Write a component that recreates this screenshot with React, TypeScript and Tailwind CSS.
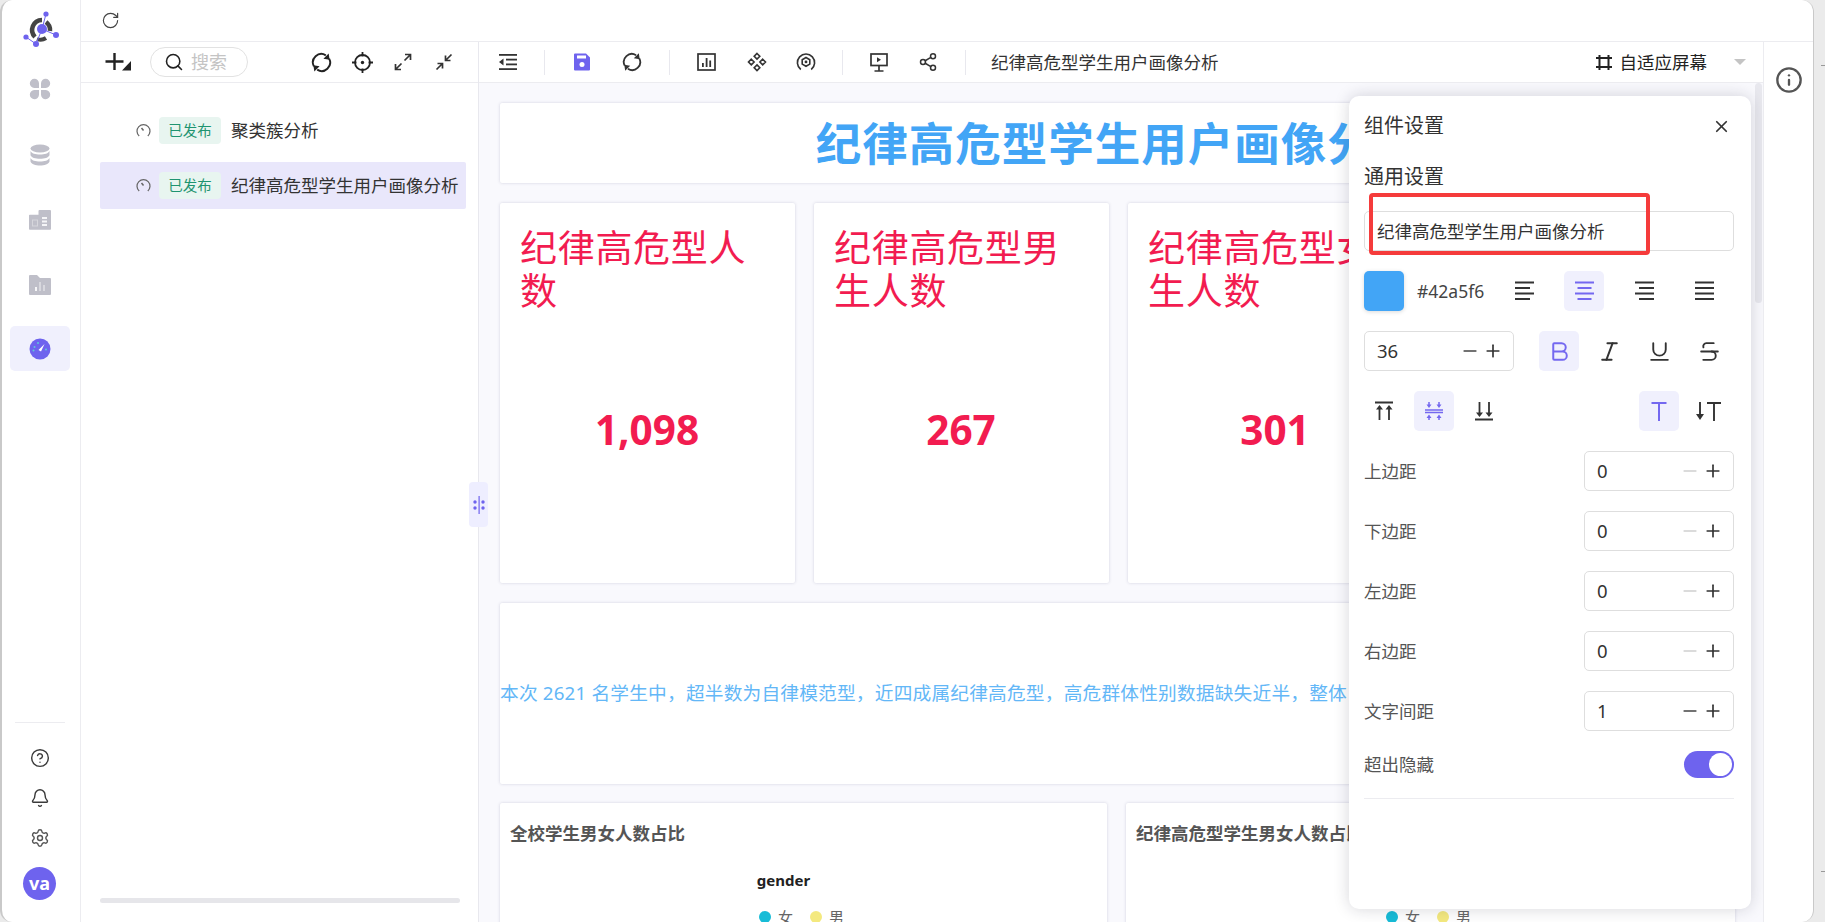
import React from "react";
import {
  RotateCw, Search, CircleHelp, Bell, Settings, Info, X, Minus, Plus,
  Bold, Italic, Underline, Strikethrough, Share2,
} from "lucide-react";

const TITLE = "纪律高危型学生用户画像分析";

const Logo = () => (
  <svg width="40" height="40" viewBox="0 0 40 40">
    <path d="M14 27a10 10 0 0 1 7-17" fill="none" stroke="#444" strokeWidth="4.5" />
    <path d="M25 12a10 10 0 0 1 4 9" fill="none" stroke="#444" strokeWidth="4.5" />
    <path d="M16 29a10 10 0 0 0 9-1" fill="none" stroke="#444" strokeWidth="4" />
    <g stroke="#6e63ee" strokeWidth="1">
      <line x1="21" y1="19" x2="25" y2="4" />
      <line x1="21" y1="19" x2="35" y2="25" />
      <line x1="21" y1="19" x2="15" y2="34" />
      <line x1="5" y1="27" x2="15" y2="34" />
    </g>
    <circle cx="21" cy="19" r="5" fill="#6e63ee" />
    <circle cx="25" cy="4" r="2.6" fill="#6e63ee" />
    <circle cx="35" cy="25" r="3" fill="#6e63ee" />
    <circle cx="15" cy="34" r="3" fill="#6e63ee" />
    <circle cx="5" cy="27" r="2.6" fill="#6e63ee" />
  </svg>
);

const Clover = () => (
  <svg width="22" height="22" viewBox="0 0 22 22" fill="#bfbfc9">
    <path d="M10 10H5.2a4.6 4.6 0 1 1 4.8-4.8z" />
    <path d="M12 10h4.8A4.6 4.6 0 1 0 12 5.2z" />
    <path d="M10 12H5.2a4.6 4.6 0 1 0 4.8 4.8z" />
    <path d="M12 12h4.8A4.6 4.6 0 1 1 12 16.800z" />
  </svg>
);

const Db = () => (
  <svg width="22" height="22" viewBox="0 0 22 22" fill="#bfbfc9">
    <ellipse cx="11" cy="4.500" rx="9.500" ry="4" />
    <path d="M1.500 7c1 2.400 5 3.600 9.500 3.600S19.500 9.400 20.500 7v4.200c-1 2.400-5 3.600-9.500 3.600S2.500 13.600 1.500 11.200z" />
    <path d="M1.500 14c1 2.400 5 3.600 9.500 3.600s8.500-1.200 9.500-3.600v3.500c-1 2.600-5 4-9.500 4s-8.500-1.400-9.500-4z" />
  </svg>
);

const Report = () => (
  <svg width="22" height="20" viewBox="0 0 22 20" fill="#bfbfc9">
    <path d="M0 5.500a.8.8 0 0 1 .8-.8H9.500V1a1 1 0 0 1 1-1H21a1 1 0 0 1 1 1v18a.8.8 0 0 1-.8.8H.8A.8.8 0 0 1 0 19z" />
    <rect x="3.500" y="10" width="5" height="6" fill="none" stroke="#d6d6dc" strokeWidth="1" />
    <g fill="#f5f5f7">
      <rect x="13" y="7" width="5" height="2" />
      <rect x="13" y="10.500" width="5" height="2" />
      <rect x="13" y="14" width="5" height="2" />
    </g>
  </svg>
);

const FolderChart = () => (
  <svg width="22" height="20" viewBox="0 0 22 20" fill="#bfbfc9">
    <path d="M0 1a1 1 0 0 1 1-1h7l3 3h10a1 1 0 0 1 1 1v15a1 1 0 0 1-1 1H1a1 1 0 0 1-1-1z" />
    <rect x="6" y="12" width="2" height="4" fill="#f5f5f7" />
    <rect x="10" y="7" width="2" height="9" fill="#d8d8de" />
    <rect x="14" y="10" width="2" height="6" fill="#d8d8de" />
  </svg>
);

const GaugeFill = () => (
  <svg width="22" height="22" viewBox="0 0 22 22">
    <circle cx="11" cy="11" r="10.500" fill="#6e63ee" />
    <path d="M9.500 12 15.500 6 12 13.500z" fill="#fff" />
    <circle cx="5.500" cy="9" r="1" fill="#5ec8d8" />
    <circle cx="9" cy="5" r="1" fill="#5ec8d8" />
    <circle cx="17" cy="11.500" r="1" fill="#5ec8d8" />
    <circle cx="4.500" cy="12.500" r="1" fill="#5ec8d8" />
  </svg>
);

const PlusCaret = () => (
  <svg width="27" height="20" viewBox="0 0 27 20">
    <path d="M9.500 1v17M0.500 9.500h18" stroke="#222" strokeWidth="2.400" fill="none" />
    <path d="M26 9v9.500H17z" fill="#222" />
  </svg>
);

const Sync = ({ size, color }: { size: number; color: string }) => (
  <svg width={size} height={size} viewBox="0 0 22 22" fill="none" stroke={color} strokeWidth="2">
    <path d="M3 15A8.800 8.800 0 0 1 15.500 3.500" />
    <path d="M19 7A8.800 8.800 0 0 1 6.500 18.500" />
    <path d="M18.500 1.500 19.500 8 13 7z" fill={color} stroke="none" />
    <path d="M3.500 20.500 2.500 14 9 15z" fill={color} stroke="none" />
  </svg>
);

const Target = () => (
  <svg width="21" height="21" viewBox="0 0 21 21" fill="none" stroke="#222" strokeWidth="1.800">
    <circle cx="10.500" cy="10.500" r="7.500" />
    <path d="M10.500 0v4.500M10.500 16.500V21M0 10.500h4.500M16.500 10.500H21" />
    <circle cx="10.500" cy="10.500" r="1.700" fill="#222" stroke="none" />
  </svg>
);

const Expand = () => (
  <svg width="18" height="18" viewBox="0 0 18 18" fill="none" stroke="#333" strokeWidth="1.700">
    <path d="M10.500 7.500 16.500 1.500M11 1.500h5.500V7" />
    <path d="M7.500 10.500 1.500 16.500M1.500 11v5.500H7" />
  </svg>
);

const Collapse = () => (
  <svg width="18" height="18" viewBox="0 0 18 18" fill="none" stroke="#333" strokeWidth="1.700">
    <path d="M16.500 1.500 10.500 7.500M10.500 2.500v5h5" />
    <path d="M1.500 16.500 7.500 10.500M2.500 10.500h5v5" />
  </svg>
);

const Indent = () => (
  <svg width="18" height="16" viewBox="0 0 18 16" fill="#333">
    <rect x="0" y="0" width="18" height="1.800" />
    <rect x="7" y="4.700" width="11" height="1.800" />
    <rect x="7" y="9.500" width="11" height="1.800" />
    <rect x="0" y="14.200" width="18" height="1.800" />
    <path d="M4.500 4.500v7L0 8z" />
  </svg>
);

const SaveIcon = () => (
  <svg width="18" height="18" viewBox="0 0 18 18">
    <path d="M1 1.500A1 1 0 0 1 2 .5h11l4 4v12a1 1 0 0 1-1 1H2a1 1 0 0 1-1-1z" fill="#6e63ee" />
    <rect x="4" y="2.500" width="9" height="3" fill="#fff" />
    <circle cx="9" cy="11.500" r="2.500" fill="#fff" />
  </svg>
);

const ChartBox = () => (
  <svg width="19" height="18" viewBox="0 0 19 18" fill="none" stroke="#333">
    <rect x="1" y="1" width="17" height="16" strokeWidth="1.700" />
    <g fill="#333" stroke="none">
      <rect x="5" y="10" width="1.800" height="4" />
      <rect x="8.700" y="5" width="1.800" height="9" />
      <rect x="12.300" y="7.500" width="1.800" height="6.500" />
    </g>
  </svg>
);

const Diamonds = () => (
  <svg width="20" height="20" viewBox="0 0 20 20" fill="none" stroke="#333" strokeWidth="1.600">
    <path d="M10 1.500 12.800 4.300 10 7.100 7.200 4.300z" />
    <path d="M10 12.900 12.800 15.700 10 18.500 7.200 15.700z" />
    <path d="M4.300 7.200 7.100 10 4.300 12.800 1.500 10z" />
    <path d="M15.700 7.200 18.500 10 15.700 12.800 12.900 10z" />
  </svg>
);

const GaugeOut = () => (
  <svg width="20" height="20" viewBox="0 0 20 20" fill="none" stroke="#333" strokeWidth="1.600">
    <path d="M4.800 17.500A8.600 8.600 0 1 1 15.200 17.500" />
    <path d="M10 5.500 13.800 7.700v4.400L10 14.300 6.200 12.100V7.700z" />
    <circle cx="10" cy="9.900" r="1.400" fill="#333" stroke="none" />
  </svg>
);

const Screen = () => (
  <svg width="18" height="19" viewBox="0 0 18 19" fill="none" stroke="#333" strokeWidth="1.700">
    <rect x="1" y="1" width="16" height="11.500" />
    <path d="M9 12.500V18M4.500 18h9" />
    <path d="M7 4.300v5l4-2.500z" fill="#333" stroke="none" />
  </svg>
);

const FitFrame = () => (
  <svg width="16" height="15" viewBox="0 0 16 15" fill="none" stroke="#222" strokeWidth="2">
    <path d="M0 3h16M0 12h16M3.500 0v15M12.500 0v15" />
  </svg>
);

const ClockSmall = () => (
  <svg width="15" height="15" viewBox="0 0 15 15" fill="none" stroke="#666" strokeWidth="1.200">
    <path d="M3.200 13a6.500 6.500 0 1 1 8.600 0" />
    <path d="M5.500 5 7.500 7.500" strokeWidth="1.500" />
  </svg>
);

const Grip = () => (
  <svg width="12" height="18" viewBox="0 0 12 18" fill="#6e63ee">
    <rect x="5.500" y="0" width="1.200" height="18" />
    <circle cx="2" cy="6" r="1.700" />
    <circle cx="2" cy="12" r="1.700" />
    <circle cx="10" cy="6" r="1.700" />
    <circle cx="10" cy="12" r="1.700" />
  </svg>
);

const AlignLines = ({ kind }: { kind: "left" | "center" | "right" | "justify" }) => {
  const short = kind === "left" ? "M0 7h15M0 18h15" : kind === "center" ? "M2.500 7h14M2.500 18h14" : kind === "right" ? "M4 7h15M4 18h15" : "M0 7h19M0 18h19";
  return (
    <svg width="19" height="20" viewBox="0 0 19 20" fill="none" stroke="currentColor" strokeWidth="1.800">
      <path d="M0 1.500h19M0 12.500h19" />
      <path d={short} />
    </svg>
  );
};

const VTop = () => (
  <svg width="20" height="20" viewBox="0 0 20 20" fill="none" stroke="currentColor" strokeWidth="1.800">
    <path d="M1 1.500h18M5.500 19V6M15 19V6" />
    <path d="M5.500 4 2 8.500h7zM15 4l-3.500 4.500h7z" fill="currentColor" stroke="none" />
  </svg>
);

const VMid = () => (
  <svg width="20" height="20" viewBox="0 0 20 20" fill="currentColor" stroke="currentColor">
    <path d="M1 9h18M1 11.500h18" strokeWidth="1.500" fill="none" />
    <path d="M5 7 2.500 3.500h5zM15 7l-2.500-3.500h5zM5 13.500l-2.500 3.500h5zM15 13.500l-2.500 3.500h5z" stroke="none" />
    <path d="M5 1v3M15 1v3M5 16v3M15 16v3" strokeWidth="1.500" fill="none" />
  </svg>
);

const VBottom = () => (
  <svg width="20" height="20" viewBox="0 0 20 20" fill="none" stroke="currentColor" strokeWidth="1.800">
    <path d="M1 18.500h18M5.500 1v13M15 1v13" />
    <path d="M5.500 16 2 11.500h7zM15 16l-3.500-4.500h7z" fill="currentColor" stroke="none" />
  </svg>
);

const TextH = () => (
  <svg width="16" height="20" viewBox="0 0 16 20" fill="none" stroke="currentColor" strokeWidth="2">
    <path d="M0.500 2h15M8 2v18" />
  </svg>
);

const TextV = () => (
  <svg width="26" height="20" viewBox="0 0 26 20" fill="none" stroke="#333" strokeWidth="1.900">
    <path d="M11 2h14M18 2v18" />
    <path d="M4 1v14" />
    <path d="M4 19 0 13h8z" fill="#333" stroke="none" />
  </svg>
);

const NavItem = ({ active, children }: { active?: boolean; children: React.ReactNode }) => (
  <div className={`flex h-[45px] w-[60px] items-center justify-center rounded-[5px] ${active ? "bg-[#f0f0fd]" : ""}`}>
    {children}
  </div>
);

const Sep = () => <div className="mx-[1px] h-[25px] w-px bg-[#e8e8ee]" />;

const Stepper = ({ value, dim, width }: { value: string; dim?: boolean; width: string }) => (
  <div className={`flex h-[40px] items-center rounded-[5px] border border-[#dedede] pl-[12px] pr-[10px] text-[18.500px] text-[#333] ${width}`}>
    <span className="flex-1">{value}</span>
    <Minus size={20} strokeWidth={2} className={dim ? "text-[#cfcfcf]" : "text-[#444]"} />
    <Plus size={20} strokeWidth={2} className="ml-[3px] text-[#333]" />
  </div>
);

const Row = ({ label, value, dim }: { label: string; value: string; dim?: boolean }) => (
  <div className="mt-[20px] flex items-center justify-between">
    <span className="text-[17.500px] text-[#555]">{label}</span>
    <Stepper value={value} dim={dim} width="w-[150px]" />
  </div>
);

const ToolBtn = ({ active, className, children }: { active?: boolean; className?: string; children: React.ReactNode }) => (
  <div
    className={`flex h-[40px] w-[40px] items-center justify-center rounded-[5px] ${
      active ? "bg-[#f0f0fd] text-[#7468f0]" : "text-[#333]"
    } ${className ?? ""}`}
  >
    {children}
  </div>
);

const Kpi = ({ title, value }: { title: string; value: string }) => (
  <div className="h-[380px] w-[295px] shrink-0 rounded-[2px] bg-white pl-[20px] pr-[20px] pt-[23px] shadow-[0_0_3px_rgba(80,80,120,0.24)]">
    <div className="h-[181px] text-[37px] leading-[43px] tracking-[0.700px] text-[#f21c50]">{title}</div>
    <div className="pr-[1px] text-center text-[40.500px] font-bold leading-[46px] text-[#f21c50]">{value}</div>
  </div>
);

const ChartCard = ({
  title,
  gender,
  className,
}: {
  title: string;
  gender?: boolean;
  className: string;
}) => (
  <div className={`h-[400px] rounded-[2px] bg-white pl-[10px] pt-[20px] shadow-[0_0_3px_rgba(80,80,120,0.24)] ${className}`}>
    <div className="text-[17.500px] font-bold leading-[20px] text-[#555]">{title}</div>
    <div className="mt-[27px] flex flex-col items-center">
      <div className={`mr-[50px] text-[15px] font-bold leading-[20px] text-[#222] ${gender ? "" : "invisible"}`}>gender</div>
      <div className="mr-[14px] mt-[17px] flex items-center text-[15px] leading-[20px] text-[#666]">
        <span className="h-[12px] w-[12px] rounded-full bg-[#17bcd7]" />
        <span className="ml-[7px]">女</span>
        <span className="ml-[17px] h-[12px] w-[12px] rounded-full bg-[#f4e97f]" />
        <span className="ml-[7px]">男</span>
      </div>
    </div>
  </div>
);

export default function App() {
  return (
    <div className="relative flex h-[922px] w-[1825px] overflow-hidden bg-[#ebebeb] font-['Noto_Sans','Noto_Sans_CJK_SC',sans-serif] text-[#333]">
      <div className="flex h-full w-[1814px] overflow-hidden rounded-[12px] border-x-2 border-l-[#c9c9c9] border-r-[#c9c9c9] bg-white [border-right-width:1px]">
        {/* Sidebar */}
        <aside className="flex w-[79px] shrink-0 flex-col items-center border-r border-[#ececf0] pr-[3px]">
          <div className="ml-[2px] mt-[10px] flex h-[40px] items-center justify-center"><Logo /></div>
          <div className="mt-[16px]"><NavItem><Clover /></NavItem></div>
          <div className="mt-[21px]"><NavItem><Db /></NavItem></div>
          <div className="mt-[20px]"><NavItem><Report /></NavItem></div>
          <div className="mt-[20px]"><NavItem><FolderChart /></NavItem></div>
          <div className="mt-[19px]"><NavItem active><GaugeFill /></NavItem></div>
          <div className="mt-auto h-px w-[50px] bg-[#ececf0]" />
          <div className="mt-[25px] flex flex-col items-center gap-[20px] text-[#3a3a3a]">
            <CircleHelp size={20} strokeWidth={1.7} />
            <Bell size={20} strokeWidth={1.7} />
            <Settings size={20} strokeWidth={1.7} className="text-[#555]" />
          </div>
          <div className="mb-[22px] mt-[19px] flex h-[33px] w-[33px] items-center justify-center rounded-full bg-[#6e63ee] text-[18px] font-bold text-white">
            va
          </div>
        </aside>

        <div className="flex min-w-0 flex-1 flex-col">
          {/* Top bar */}
          <div className="flex h-[42px] shrink-0 items-center border-b border-[#ececf0] pl-[20px]">
            <RotateCw size={19} strokeWidth={1.5} className="text-[#444]" />
          </div>

          <div className="flex min-h-0 flex-1">
            {/* Tree panel */}
            <div className="relative flex w-[398px] shrink-0 flex-col border-r border-[#e8e8ee]">
              <div className="flex h-[41px] shrink-0 items-center border-b border-[#ececf0] pl-[24px]">
                <PlusCaret />
                <div className="ml-[18px] flex h-[30px] w-[98px] shrink-0 items-center rounded-full border border-[#e2e2e2] pl-[13px]">
                  <Search size={20} strokeWidth={1.9} className="text-[#222]" />
                  <span className="ml-[7px] text-[18px] leading-[24px] text-[#c4c4c4]">搜索</span>
                </div>
                <div className="ml-[63px]"><Sync size={21} color="#222" /></div>
                <div className="ml-[20px]"><Target /></div>
                <div className="ml-[21px]"><Expand /></div>
                <div className="ml-[23px]"><Collapse /></div>
              </div>

              <div className="flex-1 pl-[19px] pr-[12px] pt-[33px]">
                <div className="flex h-[29px] items-center pl-[36px]">
                  <ClockSmall />
                  <span className="ml-[8px] flex h-[27px] w-[62px] items-center justify-center rounded-[4px] bg-[#e8f5f0] text-[14.500px] text-[#1f9470]">已发布</span>
                  <span className="ml-[10px] text-[17.500px] text-[#333]">聚类簇分析</span>
                </div>
                <div className="mt-[17px] flex h-[47px] w-[366px] items-center rounded-[2px] bg-[#e9e7fb] pl-[36px]">
                  <ClockSmall />
                  <span className="ml-[8px] flex h-[27px] w-[62px] items-center justify-center rounded-[4px] bg-[#e8f5f0] text-[14.500px] text-[#1f9470]">已发布</span>
                  <span className="ml-[10px] whitespace-nowrap text-[17.500px] text-[#333]">{TITLE}</span>
                </div>
              </div>

              <div className="mb-[19px] ml-[19px] h-[5px] w-[360px] shrink-0 rounded-full bg-[#e6e6ea]" />

              <div className="absolute right-[-10px] top-[440px] z-10 flex h-[45px] w-[19px] items-center justify-center rounded-[4px] bg-[#eeeeff]">
                <Grip />
              </div>
            </div>

            {/* Canvas column */}
            <div className="flex min-w-0 flex-1 flex-col">
              <div className="flex h-[41px] shrink-0 items-center border-b border-[#ececf0] pl-[20px]">
                <Indent />
                <div className="ml-[26px]"><Sep /></div>
                <div className="ml-[27px]"><SaveIcon /></div>
                <div className="ml-[31px]"><Sync size={20} color="#333" /></div>
                <div className="ml-[26px]"><Sep /></div>
                <div className="ml-[26px]"><ChartBox /></div>
                <div className="ml-[31px]"><Diamonds /></div>
                <div className="ml-[29px]"><GaugeOut /></div>
                <div className="ml-[25px]"><Sep /></div>
                <div className="ml-[26px]"><Screen /></div>
                <Share2 size={20} strokeWidth={1.8} className="ml-[30px] text-[#333]" />
                <div className="ml-[26px]"><Sep /></div>
                <span className="ml-[24px] whitespace-nowrap text-[17.500px] text-[#333]">{TITLE}</span>
                <div className="ml-[377px]"><FitFrame /></div>
                <span className="ml-[8px] whitespace-nowrap text-[17.500px] text-[#222]">自适应屏幕</span>
                <span className="ml-[27px] h-0 w-0 border-x-[6px] border-t-[6px] border-x-transparent border-t-[#c4c4c4]" />
              </div>

              <div className="relative min-h-0 flex-1 overflow-hidden bg-[#f9f9fd]">
                <div className="w-[1257px] pl-[21px] pt-[20px]">
                  <div className="flex h-[80px] w-[1235px] items-center justify-center whitespace-nowrap rounded-[2px] bg-white pl-[1px] text-[45.500px] font-bold tracking-[1px] text-[#42a5f6] shadow-[0_0_3px_rgba(80,80,120,0.24)]">
                    {TITLE}
                  </div>
                  <div className="mt-[20px] flex w-[1235px] gap-[19px]">
                    <Kpi title="纪律高危型人数" value="1,098" />
                    <Kpi title="纪律高危型男生人数" value="267" />
                    <Kpi title="纪律高危型女生人数" value="301" />
                    <Kpi title="纪律高危型未知人数" value="530" />
                  </div>
                  <div className="mt-[20px] flex h-[181px] w-[1235px] items-center overflow-hidden whitespace-nowrap rounded-[2px] bg-white text-[18.700px] tracking-[0.200px] text-[#63b7f7] shadow-[0_0_3px_rgba(80,80,120,0.24)]">
                    本次 2621 名学生中，超半数为自律模范型，近四成属纪律高危型，高危群体性别数据缺失近半，整体
                  </div>
                  <div className="mt-[19px] flex w-[1235px] gap-[19px]">
                    <ChartCard title="全校学生男女人数占比" gender className="w-[607px]" />
                    <ChartCard title="纪律高危型学生男女人数占比" className="w-[609px]" />
                  </div>
                </div>

                {/* vertical scrollbar */}
                <div className="absolute right-[1px] top-0 h-[220px] w-[7px] rounded-full bg-[#e8e8ee]" />

                {/* Settings panel */}
                <div className="absolute right-[12px] top-[13px] z-20 h-[813px] w-[402px] rounded-[10px] bg-white pl-[15px] pr-[17px] shadow-[0_0_16px_rgba(30,30,50,0.18)]">
                  <div className="relative">
                    <div className="flex h-[60px] items-center justify-between pr-[3px]">
                      <span className="text-[20px] text-[#333]">组件设置</span>
                      <X size={19} strokeWidth={2.2} className="text-[#333]" />
                    </div>
                    <div className="mt-[6px] flex h-[29px] items-center text-[20px] text-[#333]">通用设置</div>
                    <div className="mt-[20px] flex h-[40px] w-[370px] items-center rounded-[5px] border border-[#dedede] pl-[12px] text-[17.500px] text-[#333]">
                      {TITLE}
                    </div>
                    {/* annotation */}
                    <div className="absolute left-[5px] top-[97px] h-[62px] w-[281px] rounded-[4px] border-[4.500px] border-[#f53b3b]" />

                    <div className="mt-[20px] flex h-[40px] items-center">
                      <div className="h-[40px] w-[40px] rounded-[5px] bg-[#42a5f6] shadow-[0_1px_4px_rgba(0,0,0,0.15)]" />
                      <span className="ml-[13px] w-[76px] text-[17.500px] text-[#444]">#42a5f6</span>
                      <ToolBtn className="ml-[11px]"><AlignLines kind="left" /></ToolBtn>
                      <ToolBtn active className="ml-[20px]"><AlignLines kind="center" /></ToolBtn>
                      <ToolBtn className="ml-[20px]"><AlignLines kind="right" /></ToolBtn>
                      <ToolBtn className="ml-[20px]"><AlignLines kind="justify" /></ToolBtn>
                    </div>

                    <div className="mt-[20px] flex h-[40px] items-center">
                      <Stepper value="36" width="w-[150px]" />
                      <ToolBtn active className="ml-[25px]"><Bold size={25} strokeWidth={1.9} /></ToolBtn>
                      <ToolBtn className="ml-[10px]"><Italic size={25} strokeWidth={1.9} /></ToolBtn>
                      <ToolBtn className="ml-[10px]"><Underline size={25} strokeWidth={1.8} /></ToolBtn>
                      <ToolBtn className="ml-[10px]"><Strikethrough size={25} strokeWidth={1.8} /></ToolBtn>
                    </div>

                    <div className="mt-[20px] flex h-[40px] items-center">
                      <ToolBtn><VTop /></ToolBtn>
                      <ToolBtn active className="ml-[10px]"><VMid /></ToolBtn>
                      <ToolBtn className="ml-[10px]"><VBottom /></ToolBtn>
                      <ToolBtn active className="ml-[135px]"><TextH /></ToolBtn>
                      <ToolBtn className="ml-[10px]"><TextV /></ToolBtn>
                    </div>

                    <Row label="上边距" value="0" dim />
                    <Row label="下边距" value="0" dim />
                    <Row label="左边距" value="0" dim />
                    <Row label="右边距" value="0" dim />
                    <Row label="文字间距" value="1" />

                    <div className="mt-[20px] flex h-[27px] items-center justify-between">
                      <span className="text-[17.500px] text-[#555]">超出隐藏</span>
                      <div className="flex h-[27px] w-[50px] items-center justify-end rounded-full bg-[#6e63ee] pr-[2px]">
                        <div className="h-[23px] w-[23px] rounded-full bg-white" />
                      </div>
                    </div>
                    <div className="mt-[20px] h-px w-[370px] bg-[#ececf0]" />
                  </div>
                </div>
              </div>
            </div>

            {/* Info column */}
            <div className="flex w-[50px] shrink-0 justify-center border-l border-[#ececf0] pt-[24px]">
              <Info size={28} strokeWidth={2} className="text-[#555]" />
            </div>
          </div>
        </div>
      </div>
      <div className="absolute right-0 top-[65px] h-px w-[4px] bg-[#999]" />
      <div className="absolute right-0 top-[871px] h-px w-[4px] bg-[#999]" />
    </div>
  );
}
